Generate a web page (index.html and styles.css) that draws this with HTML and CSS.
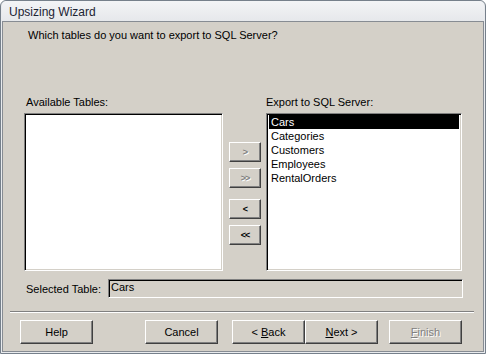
FILE: index.html
```html
<!DOCTYPE html>
<html lang="en">

<head>
    <meta charset="UTF-8">
    <meta name="viewport" content="width=device-width, initial-scale=1.0">
    <title>Upsizing Wizard</title>
    <link rel="stylesheet" href="styles.css">
</head>

<body>
    <div class="window">
        <div class="titlebar">Upsizing Wizard</div>

        <div class="client">
            <p class="question">Which tables do you want to export to SQL Server?</p>

            <div class="tables">
                <div class="table-col col-available">
                    <div class="col-label">Available Tables:</div>
                    <div class="listbox"></div>
                </div>

                <div class="move-buttons">
                    <button class="btn btn-move" disabled>&gt;</button>
                    <button class="btn btn-move" disabled>&gt;&gt;</button>
                    <button class="btn btn-move move-back">&lt;</button>
                    <button class="btn btn-move">&lt;&lt;</button>
                </div>

                <div class="table-col col-export">
                    <div class="col-label">Export to SQL Server:</div>
                    <ul class="listbox">
                        <li class="selected">Cars</li>
                        <li>Categories</li>
                        <li>Customers</li>
                        <li>Employees</li>
                        <li>RentalOrders</li>
                    </ul>
                </div>
            </div>

            <div class="selected-row">
                <span class="selected-label">Selected Table:</span>
                <div class="textbox">Cars</div>
            </div>

            <div class="separator"></div>

            <div class="actions">
                <button class="btn btn-action">Help</button>
                <button class="btn btn-action btn-cancel">Cancel</button>
                <button class="btn btn-action btn-back">&lt; <u>B</u>ack</button>
                <button class="btn btn-action"><u>N</u>ext &gt;</button>
                <button class="btn btn-action btn-finish" disabled><u>F</u>inish</button>
            </div>
        </div>
    </div>
</body>

</html>
```

FILE: styles.css
```css
:root {
    --face: #d4d0c8;
    --shadow: #808080;
    --dark: #404040;
    --frame: #e9ebee;
}

* {
    box-sizing: border-box;
}

body {
    margin: 0;
    font-family: "Liberation Sans", Arial, sans-serif;
    font-size: 11px;
    color: #000;
}

.window {
    width: 486px;
    height: 354px;
    border: 1px solid #76808b;
    border-radius: 6px 6px 0 0;
    background-color: var(--frame);
    padding: 0 1px 1px;
    display: flex;
    flex-direction: column;
}

.titlebar {
    height: 20px;
    flex: none;
    padding-left: 7px;
    font-size: 12px;
    line-height: 22px;
    color: #1c2433;
    background: linear-gradient(#f3f4f6, #e6e8eb);
    border-radius: 5px 5px 0 0;
}

.client {
    flex: 1;
    border: 1px solid #878c93;
    background-color: var(--face);
}

.question {
    margin: 7px 0 0 25px;
    line-height: 13px;
}

/* table pickers */
.tables {
    display: flex;
    margin-top: 54px;
}

.table-col {
    display: flex;
    flex-direction: column;
}

.col-available {
    margin-left: 21px;
    width: 199px;
}

.col-available .col-label {
    padding-left: 2px;
}

.col-export {
    margin-left: 5px;
    width: 196px;
}

.col-label {
    line-height: 13px;
    margin-bottom: 4px;
}

.listbox {
    height: 158px;
    margin: 0;
    padding: 1px;
    list-style: none;
    background-color: #fff;
    border: 1px solid;
    border-color: var(--shadow) #fff #fff var(--shadow);
    box-shadow: inset 1px 1px #000, inset -1px -1px var(--face);
}

.listbox li {
    height: 14px;
    line-height: 14px;
    padding-left: 2px;
    margin-left: 1px;
}

.listbox li.selected {
    background-color: #000;
    color: #fff;
    margin-right: 1px;
}

.btn {
    font-family: inherit;
    font-size: 11px;
    color: #000;
    background-color: var(--face);
    border: 1px solid;
    border-color: #fff var(--dark) var(--dark) #fff;
    box-shadow: inset -1px -1px var(--shadow);
    padding: 0;
}

.btn:disabled {
    color: var(--shadow);
    text-shadow: 1px 1px #fff;
}

.move-buttons {
    margin-left: 6px;
    padding-top: 46px;
    display: flex;
    flex-direction: column;
    gap: 6px;
}

.btn-move {
    width: 32px;
    height: 20px;
    font-size: 9px;
    font-weight: bold;
    letter-spacing: -1px;
}

.move-back {
    margin-top: 5px;
}

/* selected table */
.selected-row {
    display: flex;
    align-items: center;
    margin-top: 8px;
    padding-left: 23px;
}

.selected-label {
    width: 82px;
}

.textbox {
    width: 355px;
    height: 19px;
    line-height: 15px;
    padding-left: 2px;
    border: 1px solid;
    border-color: var(--shadow) #fff #fff var(--shadow);
    box-shadow: inset 1px 1px #000, inset -1px -1px var(--face);
}

.separator {
    margin: 13px 0 0 7px;
    width: 464px;
    height: 2px;
    border-top: 1px solid var(--shadow);
    border-bottom: 1px solid #fff;
}

/* wizard buttons */
.actions {
    display: flex;
    margin-top: 7px;
    padding-left: 17px;
}

.btn-action {
    width: 73px;
    height: 24px;
}

.btn-cancel {
    margin-left: 52px;
}

.btn-back {
    margin-left: 14px;
}

.btn-finish {
    margin-left: 11px;
}
```
